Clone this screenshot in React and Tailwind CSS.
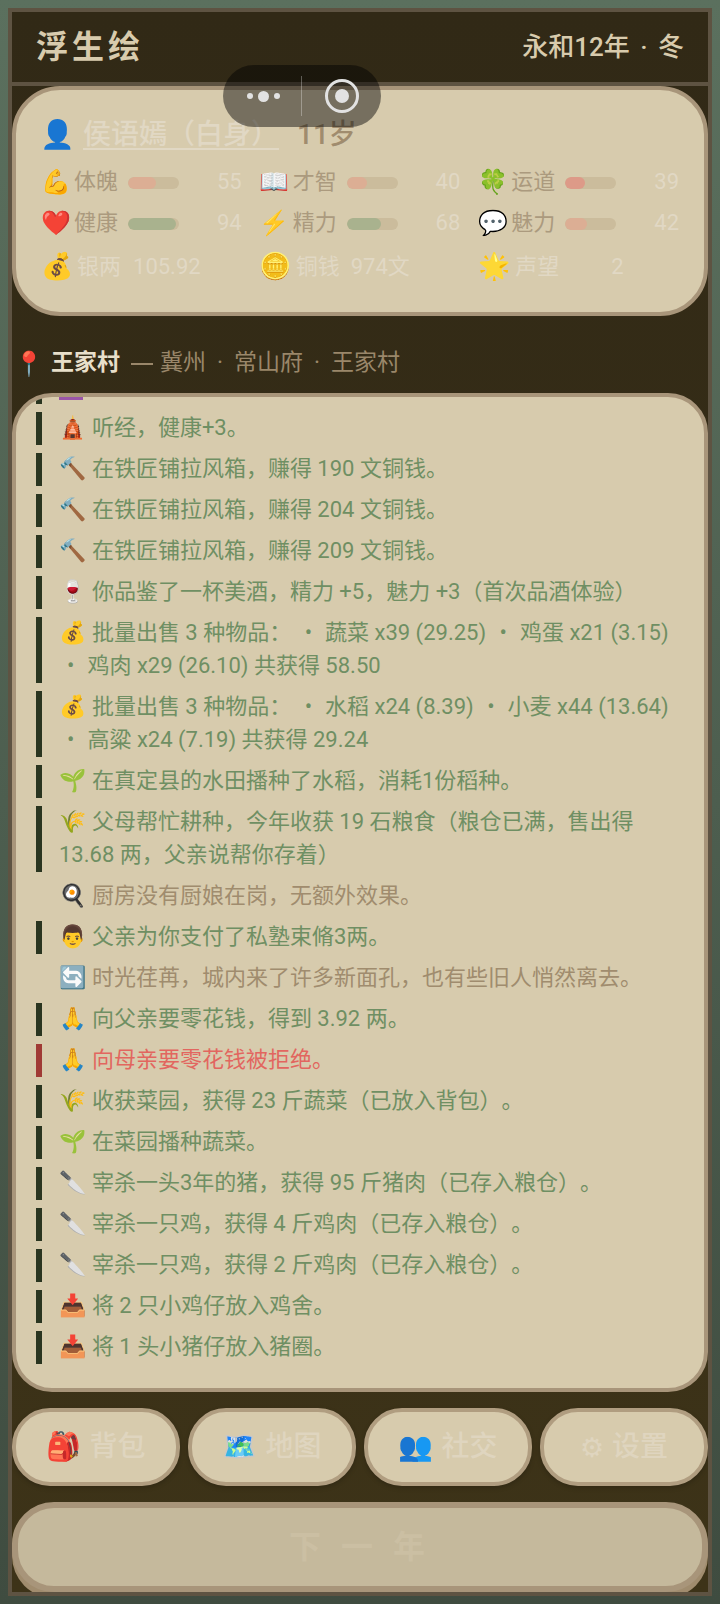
const FONT = "font-['Roboto','Noto_Sans_CJK_SC','Noto_Color_Emoji',sans-serif]";

const stats = [
  { icon: "💪", label: "体魄", value: 55, fill: "bg-[#dcae94]" },
  { icon: "📖", label: "才智", value: 40, fill: "bg-[#dcae94]" },
  { icon: "🍀", label: "运道", value: 39, fill: "bg-[#dd9a88]" },
  { icon: "❤️", label: "健康", value: 94, fill: "bg-[#a9b28e]" },
  { icon: "⚡", label: "精力", value: 68, fill: "bg-[#a9b28e]" },
  { icon: "💬", label: "魅力", value: 42, fill: "bg-[#dcae94]" },
];

const logs = [
  { icon: "🛕", text: "听经，健康+3。" },
  { icon: "🔨", text: "在铁匠铺拉风箱，赚得 190 文铜钱。" },
  { icon: "🔨", text: "在铁匠铺拉风箱，赚得 204 文铜钱。" },
  { icon: "🔨", text: "在铁匠铺拉风箱，赚得 209 文铜钱。" },
  { icon: "🍷", text: "你品鉴了一杯美酒，精力 +5，魅力 +3（首次品酒体验）" },
  {
    icon: "💰",
    text: "批量出售 3 种物品：",
    items: ["蔬菜 x39 (29.25)", "鸡蛋 x21 (3.15)", "鸡肉 x29 (26.10)"],
    after: "共获得 58.50",
  },
  {
    icon: "💰",
    text: "批量出售 3 种物品：",
    items: ["水稻 x24 (8.39)", "小麦 x44 (13.64)", "高粱 x24 (7.19)"],
    after: "共获得 29.24",
  },
  { icon: "🌱", text: "在真定县的水田播种了水稻，消耗1份稻种。" },
  { icon: "🌾", text: "父母帮忙耕种，今年收获 19 石粮食（粮仓已满，售出得 13.68 两，父亲说帮你存着）" },
  { icon: "🍳", text: "厨房没有厨娘在岗，无额外效果。", kind: "muted" },
  { icon: "👨", text: "父亲为你支付了私塾束脩3两。" },
  { icon: "🔄", text: "时光荏苒，城内来了许多新面孔，也有些旧人悄然离去。", kind: "muted" },
  { icon: "🙏", text: "向父亲要零花钱，得到 3.92 两。" },
  { icon: "🙏", text: "向母亲要零花钱被拒绝。", kind: "bad" },
  { icon: "🌾", text: "收获菜园，获得 23 斤蔬菜（已放入背包）。" },
  { icon: "🌱", text: "在菜园播种蔬菜。" },
  { icon: "🔪", text: "宰杀一头3年的猪，获得 95 斤猪肉（已存入粮仓）。" },
  { icon: "🔪", text: "宰杀一只鸡，获得 4 斤鸡肉（已存入粮仓）。" },
  { icon: "🔪", text: "宰杀一只鸡，获得 2 斤鸡肉（已存入粮仓）。" },
  { icon: "📥", text: "将 2 只小鸡仔放入鸡舍。" },
  { icon: "📥", text: "将 1 头小猪仔放入猪圈。" },
];

const navs = [
  { icon: "🎒", label: "背包" },
  { icon: "🗺️", label: "地图" },
  { icon: "👥", label: "社交" },
  { icon: "⚙\uFE0E", label: "设置", plain: true },
];

function Stat({ icon, label, value, fill }) {
  return (
    <div className="flex items-center h-[41px]">
      <span className="w-[33px] shrink-0 text-[24px] leading-none">{icon}</span>
      <span className="text-[22px] text-[#ab9a7e]">{label}</span>
      <div className="ml-[10px] w-[51px] h-[12px] mt-[2px] rounded-full bg-[#cbbc9c] overflow-hidden">
        <div className={`h-full rounded-full ${fill}`} style={{ width: `${value}%` }} />
      </div>
      <span className="ml-auto text-[22px] text-[#e1d8c4]">{value}</span>
    </div>
  );
}

function LogRow({ icon, text, kind, items, after }) {
  const bar = kind === "muted" ? "border-transparent" : kind === "bad" ? "border-[#a03a35]" : "border-[#2a3520]";
  const color = kind === "muted" ? "text-[#a08c6e]" : kind === "bad" ? "text-[#e2665f]" : "text-[#6f8f63]";
  return (
    <div className={`border-l-[6px] pl-[17px] text-[22px] leading-[33px] ${bar} ${color}`}>
      <div className="relative -top-[1px]">
        {icon} {text}
        {items && items.map((item) => (
          <span key={item}>
            {" "}
            <span className="whitespace-nowrap">
              <span className="ml-[8px] mr-[13px]">•</span>
              {item}
            </span>
          </span>
        ))}
        {after && ` ${after}`}
      </div>
    </div>
  );
}

export default function App() {
  return (
    <div className={`${FONT} [text-spacing-trim:space-all] relative h-[1604px] p-2 overflow-hidden bg-[linear-gradient(180deg,#5b705e,#3f4c40)]`}>
      <div className="h-full flex flex-col border-4 border-[#5e5342] overflow-hidden bg-[linear-gradient(180deg,#312916,#3d3318)]">
        <header className="h-[74px] shrink-0 flex items-center justify-between pl-[24px] pr-[24px] border-b-4 border-[#5e5342]">
          <h1 className="text-[32px] font-bold tracking-[4px] text-[#d8cbad]">浮生绘</h1>
          <span className="text-[26px] font-medium text-[#d8cbad] whitespace-pre">永和12年 <span className="mx-[4px]">·</span> 冬</span>
        </header>

        <section className="h-[230px] shrink-0 rounded-[48px] border-4 border-[#a8957a] bg-[#d7cbad] pl-[25px] pr-[25px] pt-[22px]">
          <div className="flex items-center h-[49px]">
            <span className="text-[28px] leading-none w-[38px] -ml-[1px] mb-[4px]">👤</span>
            <span className="ml-[5px] mb-[4px] text-[28px] font-medium text-[#e1d8c4] underline underline-offset-4">侯语嫣（白身）</span>
            <span className="ml-[18px] mb-[4px] text-[28px] font-medium text-[#a08c6e]">11岁</span>
          </div>
          <div className="grid grid-cols-3 gap-x-[18px]">
            {stats.map((s) => (
              <Stat key={s.label} {...s} />
            ))}
          </div>
          <div className="grid grid-cols-3 gap-x-[18px] mt-[2px] text-[22px] text-[#e1d8c4]">
            <div className="flex items-center h-[42px]">
              <span className="w-[36px] text-[26px] leading-none">💰</span>
              <span>银两</span>
              <span className="ml-[12px]">105.92</span>
            </div>
            <div className="flex items-center h-[42px]">
              <span className="w-[36px] text-[26px] leading-none">🪙</span>
              <span>铜钱</span>
              <span className="ml-[11px]">974文</span>
            </div>
            <div className="flex items-center h-[42px]">
              <span className="w-[37px] text-[26px] leading-none">🌟</span>
              <span>声望</span>
              <span className="ml-[52px]">2</span>
            </div>
          </div>
        </section>

        <div className="h-[77px] shrink-0 flex items-center pl-[2px] pt-[18px] text-[23px] text-[#9a876a]">
          <span className="w-[37px] text-[24px] leading-none">📍</span>
          <span className="font-bold text-[#e8dfca]">王家村</span>
          <span className="ml-[11px] w-[22px] h-[2px] bg-[#9a876a]" />
          <span className="ml-[7px]">冀州</span>
          <span className="mx-[11px]">·</span>
          <span>常山府</span>
          <span className="mx-[11px]">·</span>
          <span>王家村</span>
        </div>

        <section className="h-[999px] shrink-0 rounded-[40px] border-4 border-[#a8957a] bg-[#d7cbad] overflow-hidden pl-[20px] pr-[28px]">
          <div className="flex flex-col gap-[8px] -mt-[26px]">
            <div className="border-l-[6px] border-[#2a3520] h-[33px] pl-[17px]">
              <div className="relative top-[26px] w-[24px] h-[3px] bg-[#9a55a8]" />
            </div>
            {logs.map((l, i) => (
              <LogRow key={i} {...l} />
            ))}
          </div>
        </section>

        <nav className="grid grid-cols-4 gap-[8px] mt-[16px] shrink-0">
          {navs.map((n) => (
            <button
              key={n.label}
              className="h-[78px] rounded-[38px] border-4 border-[#b09d80] bg-[#d7cbad] shadow-[0_2px_5px_rgba(0,0,0,0.2)] flex items-center justify-center text-[28px] font-medium text-[#dfd5bf]"
            >
              <span className={`mr-[8px] leading-none ${n.plain ? "font-['DejaVu_Sans'] text-[27px]" : ""}`}>{n.icon}</span>
              {n.label}
            </button>
          ))}
        </nav>

        <button className="mt-[16px] h-[90px] shrink-0 rounded-[42px] border-[6px] border-[#a8957a] bg-[#c5b99c] shadow-[0_6px_0_#a08c6e] text-[32px] font-bold tracking-[6px] text-[#cbbfa3]">
          下 一 年
        </button>
      </div>

      <div className="absolute left-[223px] top-[65px] w-[158px] h-[62px] rounded-full bg-black/45 flex items-center">
        <div className="w-[78px] flex items-center justify-center gap-[5px] pl-[2px]">
          <span className="w-[6px] h-[6px] rounded-full bg-[#e2e2e2]" />
          <span className="w-[11px] h-[11px] rounded-full bg-[#e2e2e2]" />
          <span className="w-[6px] h-[6px] rounded-full bg-[#e2e2e2]" />
        </div>
        <div className="w-px h-[40px] bg-white/30" />
        <div className="ml-[23px] w-[34px] h-[34px] rounded-full border-[3px] border-[#e2e2e2] flex items-center justify-center">
          <span className="w-[14px] h-[14px] rounded-full bg-[#e2e2e2]" />
        </div>
      </div>
    </div>
  );
}
